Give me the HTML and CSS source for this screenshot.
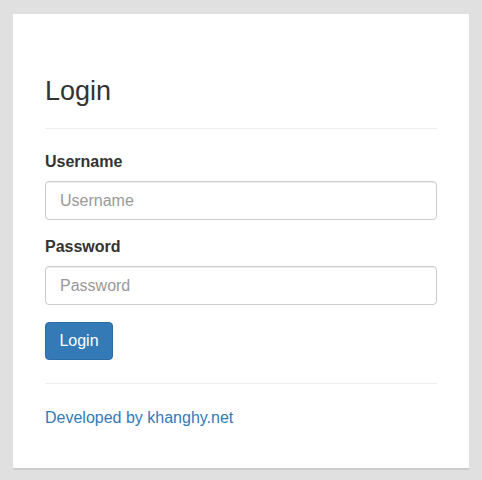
FILE: index.html
```html
<!DOCTYPE html>
<html>
<head>
<meta charset="utf-8">
<link rel="stylesheet" href="styles.css">
</head>
<body>
<div class="card">
  <h2 class="title">Login</h2>
  <hr class="rule rule-top">
  <form class="form">
    <div class="group">
      <label class="label" for="u">Username</label>
      <input class="input" id="u" type="text" placeholder="Username">
    </div>
    <div class="group">
      <label class="label" for="p">Password</label>
      <input class="input" id="p" type="password" placeholder="Password">
    </div>
    <button class="btn" type="button">Login</button>
  </form>
  <hr class="rule rule-bottom">
  <a class="link" href="#">Developed by khanghy.net</a>
</div>
</body>
</html>
```
FILE: styles.css
```css
html, body {
  margin: 0;
  padding: 0;
}
body {
  background: #e0e0e0;
  font-family: "Liberation Sans", Arial, sans-serif;
  color: #333;
  padding: 14px 13px 0;
  height: 480px;
  box-sizing: border-box;
}
.card {
  background: #fff;
  width: 456px;
  height: 454px;
  box-sizing: border-box;
  padding: 30px 32px 0;
  box-shadow: 0 2px 0 #cbcbcb;
  display: flex;
  flex-direction: column;
}
.title {
  font-size: 27px;
  font-weight: 400;
  line-height: 30px;
  margin: 32px 0 0;
}
.rule {
  border: 0;
  border-top: 1px solid #eee;
  margin: 0;
  width: 100%;
}
.rule-top {
  margin-top: 22px;
}
.form {
  display: flex;
  flex-direction: column;
  align-items: flex-start;
  margin-top: 22px;
}
.group {
  display: flex;
  flex-direction: column;
  width: 100%;
  margin-bottom: 16px;
}
.label {
  font-size: 16px;
  font-weight: 700;
  line-height: 22px;
  margin-bottom: 8px;
}
.input {
  height: 39px;
  box-sizing: border-box;
  border: 1px solid #ccc;
  border-radius: 4px;
  box-shadow: inset 0 1px 1px rgba(0,0,0,.075);
  padding: 0 14px;
  font-family: "Liberation Sans", Arial, sans-serif;
  font-size: 16px;
  color: #555;
  width: 100%;
  margin: 0;
}
.input::placeholder {
  color: #999;
}
.btn {
  margin-top: 1px;
  height: 38px;
  width: 68px;
  padding: 0;
  background: #337ab7;
  border: 1px solid #2e6da4;
  border-radius: 4px;
  color: #fff;
  font-family: "Liberation Sans", Arial, sans-serif;
  font-size: 16px;
  line-height: 1;
}
.rule-bottom {
  margin-top: 23px;
}
.link {
  margin-top: 23px;
  font-size: 16px;
  line-height: 22px;
  color: #337ab7;
  text-decoration: none;
  align-self: flex-start;
}
```
